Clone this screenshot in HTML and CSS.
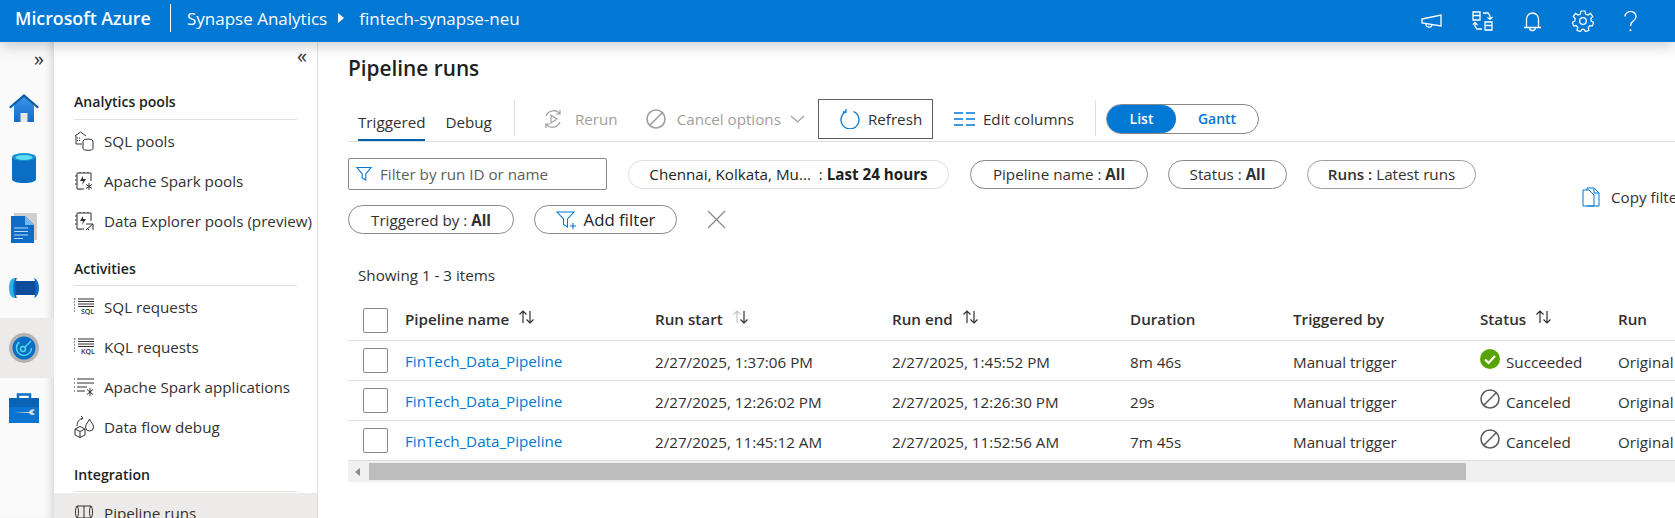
FILE: index.html
```html
<!DOCTYPE html>
<html lang="en">
<head>
  <meta charset="UTF-8">
  <title>Pipeline runs - Synapse Analytics</title>
  <link rel="stylesheet" href="styles.css">
</head>
<body>
  <svg class="defs" width="0" height="0">
    <defs>
      <linearGradient id="blueDown" x1="0" y1="0" x2="0" y2="1">
        <stop offset="0" stop-color="#3f97ee"/>
        <stop offset="1" stop-color="#0f6cc4"/>
      </linearGradient>
      <symbol id="sortIcon" viewBox="0 0 18 16">
        <path class="sort-up" d="M5 14V2M1.500 5.500 5 2l3.500 3.500" fill="none" stroke-width="1.200"/>
        <path d="M12 2v12M8.500 10.500 12 14l3.500-3.500" fill="none" stroke="#323130" stroke-width="1.200"/>
      </symbol>
      <symbol id="cancelIcon" viewBox="0 0 20 20">
        <circle cx="10" cy="10" r="9" fill="none" stroke="currentColor" stroke-width="1.600"/>
        <path d="M3.800 16.200 16.200 3.800" stroke="currentColor" stroke-width="1.600"/>
      </symbol>
      <symbol id="funnelIcon" viewBox="0 0 16 16">
        <path d="M1 1.500h14L9.800 8v6l-3.600-2V8z" fill="none" stroke="#0078d4" stroke-width="1.100"/>
      </symbol>
    </defs>
  </svg>

  <header class="topbar">
    <span class="brand">Microsoft Azure</span>
    <span class="crumb">Synapse Analytics</span>
    <svg class="crumb-arrow" width="6" height="10" viewBox="0 0 6 10"><path d="M0 0l6 5-6 5z" fill="#fff"/></svg>
    <span class="crumb crumb-workspace">fintech-synapse-neu</span>
    <div class="top-icons">
      <svg width="21" height="16" viewBox="0 0 21 16"><path d="M1 6l19-4v11L1 10zM5 11a3 2.500 0 0 0 6 1" fill="none" stroke="#fff" stroke-width="1.300"/></svg>
      <svg width="21" height="20" viewBox="0 0 21 20"><path d="M1 1h7v8H1zM1 4.500h7M13 11h7v8h-7zM13 14.500h7M11 2h5l2 3v3M15.500 6.500 18 8.500l2.500-2.500M10 18H5l-2-3v-3M.8 13.500 3 11.500l2.500 2.500" fill="none" stroke="#fff" stroke-width="1.300"/></svg>
      <svg width="19" height="21" viewBox="0 0 19 21"><path d="M1 16.500h17M3.500 16V8a6 6 0 0 1 12 0v8M6.500 17a3 2.500 0 0 0 6 0" fill="none" stroke="#fff" stroke-width="1.300"/></svg>
      <svg width="22" height="22" viewBox="0 0 22 22"><path d="M9 1h4l.6 3 2.300 1 2.600-1.600 2.200 3L18.800 8.500l.4 2.500 2.300 1.200-1 3.600-2.800-.2-1.500 2 .8 2.700-3.500 1.300-1.500-2.300h-2l-1.500 2.300-3.500-1.300.8-2.700-1.500-2-2.800.2-1-3.600L2.800 11l.4-2.500L1.300 6.400l2.200-3L6.100 5l2.300-1z" fill="none" stroke="#fff" stroke-width="1.200"/><circle cx="11" cy="11" r="3.300" fill="none" stroke="#fff" stroke-width="1.300"/></svg>
      <svg width="13" height="21" viewBox="0 0 13 21"><path d="M1 5.500a5.500 5 0 1 1 8.500 4.200C7.500 11 6.500 12 6.500 15" fill="none" stroke="#fff" stroke-width="1.300"/><circle cx="6.500" cy="19.300" r="1" fill="#fff"/></svg>
    </div>
  </header>

  <div class="workspace">
    <nav class="rail">
      <div class="rail-toggle">»</div>
      <div class="rail-item">
        <svg width="30" height="30" viewBox="0 0 30 30"><path d="M5 12 15 3l10 9v17H5z" fill="url(#blueDown)"/><path d="M0 14 15 1l15 13-1.500 1.500L15 4 1.500 15.500z" fill="#0f5ea8"/><rect x="11.500" y="20" width="7" height="9" fill="#e8e6e4"/></svg>
      </div>
      <div class="rail-item">
        <svg width="24" height="30" viewBox="0 0 24 30"><path d="M0 4v22c0 2.500 5 4 12 4s12-1.500 12-4V4z" fill="#0a6fc4"/><ellipse cx="12" cy="4" rx="12" ry="4" fill="#1b93d6"/><ellipse cx="12" cy="4.500" rx="8.500" ry="2.500" fill="#5fe0f0"/></svg>
      </div>
      <div class="rail-item">
        <svg width="26" height="30" viewBox="0 0 26 30"><rect x="3" y="0" width="23" height="27" fill="#d0d0d0"/><path d="M0 3h14l9 9v18H0z" fill="#0c6cc6"/><path d="M14 3l9 9h-9z" fill="#75b8f2"/><path d="M3 15h14M3 18.500h14M3 22h14M3 25.500h9" stroke="#b9dcf8"/></svg>
      </div>
      <div class="rail-item">
        <svg width="30" height="20" viewBox="0 0 30 20"><path d="M3 3h24v14H3z" fill="#104c9c"/><path d="M6 0C2 0 0 4 0 10s2 10 6 10c-2-3-2-17 0-20z" fill="#27b6e8"/><path d="M25 0c3 1 5 5 5 10s-2 9-5 10c2-3 2-17 0-20zM6 0c-2 3-2 17 0 20h2C6 17 6 3 8 0z" fill="#0b6cc0"/></svg>
      </div>
      <div class="rail-item rail-item-active">
        <svg width="30" height="30" viewBox="0 0 30 30"><circle cx="15" cy="15" r="15" fill="#b4b4b4"/><circle cx="15" cy="15" r="11.500" fill="#0a6fc4"/><circle cx="15" cy="15" r="7.500" fill="none" stroke="#50d4f0" stroke-width="1.500" stroke-dasharray="30 18"/><circle cx="14" cy="16" r="2.500" fill="none" stroke="#50d4f0" stroke-width="1.500"/><path d="M15.500 14.500 22 8" stroke="#50d4f0" stroke-width="1.500"/></svg>
      </div>
      <div class="rail-item">
        <svg width="30" height="30" viewBox="0 0 30 30"><path d="M9 6V1.500h12V6" fill="none" stroke="#0a6fc4" stroke-width="2.500"/><rect y="5" width="30" height="25" fill="#0b74d1"/><rect y="5" width="30" height="9" fill="#0a63b4"/><path d="M5 19h15a4 4 0 0 1 6-2l-3 2 3 2a4 4 0 0 1-6-1z" fill="#dcdcdc"/></svg>
      </div>
    </nav>

    <aside class="sidebar">
      <div class="collapse">«</div>

      <div class="nav-group nav-group-first">
        <h3 class="nav-heading">Analytics pools</h3>
        <div class="nav-row">
          <svg class="nav-icon" width="20" height="20" viewBox="0 0 20 20"><path d="M1 5 6.500 1 12 5M2 5v8h6M5 7h1M5 9.500h1M3 7h1M3 9.500h1" fill="none" stroke="#323130"/><ellipse cx="14" cy="10" rx="5" ry="2" fill="#fff" stroke="#323130"/><path d="M9 10v7.500c0 1 2 1.800 5 1.800s5-.8 5-1.800V10" fill="#fff" stroke="#323130"/></svg>
          SQL pools
        </div>
        <div class="nav-row">
          <svg class="nav-icon" width="20" height="20" viewBox="0 0 20 20"><path d="M10 18H3V2h14v8M1 5h2M1 9h2M1 13h2M6 1v1M10 1v1M14 1v1M6 18v1" fill="none" stroke="#323130"/><path d="M9 5 6 10h3l-1 4 4-6H9z" fill="#323130"/><path d="M15 12v7M12 13.500l6 4M18 13.500l-6 4" stroke="#323130"/></svg>
          Apache Spark pools
        </div>
        <div class="nav-row">
          <svg class="nav-icon" width="20" height="20" viewBox="0 0 20 20"><path d="M10 18H3V2h14v8M1 5h2M1 9h2M1 13h2M6 1v1M10 1v1M14 1v1M6 18v1" fill="none" stroke="#323130"/><path d="M9 5 6 10h3l-1 4 4-6H9z" fill="#323130"/><path d="M12 13l7 0v6M12 19l7-6M13 17l2 2" fill="none" stroke="#323130"/></svg>
          Data Explorer pools (preview)
        </div>
      </div>

      <div class="nav-group">
        <h3 class="nav-heading">Activities</h3>
        <div class="nav-row">
          <svg class="nav-icon" width="20" height="20" viewBox="0 0 20 20"><path d="M4 2h16M4 4.500h16M4 7h16M4 9.500h16M0 2h1.500M0 5h1M0 8h1M0 11h1M0 14h1" fill="none" stroke="#323130"/></svg>
          <span class="nav-mini">SQL</span>
          SQL requests
        </div>
        <div class="nav-row">
          <svg class="nav-icon" width="20" height="20" viewBox="0 0 20 20"><path d="M4 2h16M4 4.500h16M4 7h16M4 9.500h16M0 2h1.500M0 5h1M0 8h1M0 11h1M0 14h1" fill="none" stroke="#323130"/></svg>
          <span class="nav-mini">KQL</span>
          KQL requests
        </div>
        <div class="nav-row">
          <svg class="nav-icon" width="20" height="20" viewBox="0 0 20 20"><path d="M3 2h17M3 6h17M3 10h10M3 14h8M0 2h1M0 6h1M0 10h1M0 14h1" fill="none" stroke="#323130"/><path d="M16 11v8M13 12.500l6 5M19 12.500l-6 5" stroke="#323130"/></svg>
          Apache Spark applications
        </div>
        <div class="nav-row">
          <svg class="nav-icon" width="20" height="22" viewBox="0 0 20 22"><path d="M1 13l5-2.500 5 2.500v6l-5 2.500-5-2.500zM1 13l5 2.500 5-2.500M6 15.500v6M15.500 3c1 3 4 5 4 8a4 4 0 0 1-8 0c0-3 3-5 4-8zM3 10C3 6 5 3 9 2M7 0l2 2-2 2" fill="none" stroke="#323130"/></svg>
          Data flow debug
        </div>
      </div>

      <div class="nav-group">
        <h3 class="nav-heading">Integration</h3>
        <div class="nav-row nav-row-active">
          <svg class="nav-icon" width="20" height="20" viewBox="0 0 20 20"><path d="M3 3c-2 2-2 10 0 12M3 3c2 2 2 10 0 12M3 3h14M3 15h14M17 3c2 2 2 10 0 12M17 3c-2 2-2 10 0 12M10 3v12" fill="none" stroke="#323130"/></svg>
          Pipeline runs
        </div>
      </div>
    </aside>

    <main class="content">
      <h1 class="page-title">Pipeline runs</h1>

      <div class="toolbar">
        <span class="tab tab-active">Triggered</span>
        <span class="tab tab-debug">Debug</span>
        <span class="tool-divider"></span>
        <span class="tool tool-disabled tool-rerun">
          <svg width="20" height="20" viewBox="0 0 20 20"><path d="M3 7a8 8 0 0 1 14-2M17 13a8 8 0 0 1-14 2M17 1v4h-4M3 19v-4h4M8 6l6 4-6 4z" fill="none" stroke="#a19f9d" stroke-width="1.200"/></svg>
          Rerun
        </span>
        <span class="tool tool-disabled tool-cancel">
          <svg class="disabled-icon" width="20" height="20"><use href="#cancelIcon"/></svg>
          Cancel options
          <svg width="15" height="8" viewBox="0 0 15 8"><path d="M1 1l6.500 6L14 1" fill="none" stroke="#a19f9d" stroke-width="1.200"/></svg>
        </span>
        <span class="tool tool-refresh">
          <svg width="20" height="20" viewBox="0 0 20 20"><path d="M13.500 2.500a9 9 0 1 1-7 0M6 0v3H3" fill="none" stroke="#0078d4" stroke-width="1.300"/></svg>
          Refresh
        </span>
        <span class="tool tool-columns">
          <svg width="21" height="14" viewBox="0 0 21 14"><path d="M0 1h9M12 1h9M0 7h9M12 7h9M0 13h9M12 13h9" stroke="#0078d4" stroke-width="1.300"/></svg>
          Edit columns
        </span>
        <span class="tool-divider tool-divider-2"></span>
        <div class="view-toggle">
          <span class="view-option view-option-on">List</span>
          <span class="view-option">Gantt</span>
        </div>
      </div>

      <div class="filter-area">
        <div class="filter-rows">
          <div class="filter-row">
            <div class="search">
              <svg width="16" height="16"><use href="#funnelIcon"/></svg>
              <span>Filter by run ID or name</span>
            </div>
            <span class="chip chip-light chip-region"><span>Chennai, Kolkata, Mu... &nbsp;: <b>Last 24 hours</b></span></span>
            <span class="chip chip-pipeline"><span>Pipeline name : <b>All</b></span></span>
            <span class="chip chip-status"><span>Status : <b>All</b></span></span>
            <span class="chip chip-runs"><span><b class="semi">Runs :</b> Latest runs</span></span>
          </div>
          <div class="filter-row">
            <span class="chip chip-trigger"><span>Triggered by : <b>All</b></span></span>
            <span class="chip chip-add">
              <svg width="20" height="20" viewBox="0 0 20 20"><path d="M1 2h17l-6.500 7v8l-4-2.500V9z" fill="none" stroke="#0078d4" stroke-width="1.100"/><path d="M14 16h6M17 13v6" stroke="#0078d4" stroke-width="1.100"/></svg>
              Add filter
            </span>
            <svg class="clear-filter" width="19" height="19" viewBox="0 0 19 19"><path d="M1 1l17 17M18 1 1 18" stroke="#8a8886" stroke-width="1.200"/></svg>
          </div>
        </div>
        <div class="copy-filter">
          <svg width="18" height="20" viewBox="0 0 18 20"><path d="M5 3V1h7l5 5v13H5M12 1v5h5M1 3h6l5 5v11H1z" fill="#fff" stroke="#0078d4"/></svg>
          Copy filters
        </div>
      </div>

      <div class="showing">Showing 1 - 3 items</div>

      <div class="grid-row grid-head">
        <span class="check"></span>
        <span>Pipeline name <svg class="sort sort-dark" width="18" height="16"><use href="#sortIcon"/></svg></span>
        <span>Run start <svg class="sort sort-pale" width="18" height="16"><use href="#sortIcon"/></svg></span>
        <span>Run end <svg class="sort sort-dark" width="18" height="16"><use href="#sortIcon"/></svg></span>
        <span>Duration</span>
        <span>Triggered by</span>
        <span>Status <svg class="sort sort-dark" width="18" height="16"><use href="#sortIcon"/></svg></span>
        <span>Run</span>
      </div>

      <div class="grid-row">
        <span class="check"></span>
        <a class="run-link">FinTech_Data_Pipeline</a>
        <span>2/27/2025, 1:37:06 PM</span>
        <span>2/27/2025, 1:45:52 PM</span>
        <span>8m 46s</span>
        <span>Manual trigger</span>
        <span class="status">
          <svg width="20" height="20" viewBox="0 0 20 20"><circle cx="10" cy="10" r="10" fill="#57a300"/><path d="M5 10.500 8.500 14 15 7" fill="none" stroke="#fff" stroke-width="2.200"/></svg>
          Succeeded
        </span>
        <span>Original</span>
      </div>
      <div class="grid-row">
        <span class="check"></span>
        <a class="run-link">FinTech_Data_Pipeline</a>
        <span>2/27/2025, 12:26:02 PM</span>
        <span>2/27/2025, 12:26:30 PM</span>
        <span>29s</span>
        <span>Manual trigger</span>
        <span class="status">
          <svg class="canceled-icon" width="20" height="20"><use href="#cancelIcon"/></svg>
          Canceled
        </span>
        <span>Original</span>
      </div>
      <div class="grid-row">
        <span class="check"></span>
        <a class="run-link">FinTech_Data_Pipeline</a>
        <span>2/27/2025, 11:45:12 AM</span>
        <span>2/27/2025, 11:52:56 AM</span>
        <span>7m 45s</span>
        <span>Manual trigger</span>
        <span class="status">
          <svg class="canceled-icon" width="20" height="20"><use href="#cancelIcon"/></svg>
          Canceled
        </span>
        <span>Original</span>
      </div>

      <div class="hscroll">
        <span class="hscroll-arrow"></span>
        <span class="hscroll-thumb"></span>
      </div>
    </main>
  </div>
</body>
</html>
```

FILE: styles.css
```css
* {
  box-sizing: border-box;
}

html, body {
  height: 518px;
  margin: 0;
  overflow: hidden;
}

body {
  font-family: "Open Sans", "Noto Sans", sans-serif;
  font-size: 15.2px;
  color: #323130;
  background: #fff;
}

.defs {
  display: block;
  height: 0;
}

.topbar {
  position: relative;
  z-index: 3;
  display: flex;
  align-items: center;
  height: 42px;
  padding: 0 0 6px 15px;
  background: #0078d4;
  color: #fff;
  box-shadow: 0 3px 16px rgba(0, 0, 0, 0.22);
}

.brand {
  flex: 0 0 156px;
  height: 28px;
  line-height: 28px;
  font-size: 17.8px;
  font-weight: 600;
  border-right: 1px solid #fff;
  white-space: nowrap;
}

.crumb {
  font-size: 17px;
  margin-left: 16px;
}

.crumb-arrow {
  margin-left: 11px;
}

.crumb-workspace {
  margin-left: 15px;
}

.top-icons {
  display: flex;
  align-items: center;
  gap: 30px;
  margin-left: auto;
  padding: 6px 38px 0 0;
}

.workspace {
  display: flex;
  height: 476px;
}

.rail {
  position: relative;
  z-index: 2;
  flex: 0 0 54px;
  background: #fafafa;
  box-shadow: inset -8px 0 8px -6px rgba(0, 0, 0, 0.16);
}

.rail-toggle {
  height: 36px;
  padding: 4px 0 0 34px;
  font-size: 20px;
  line-height: 26px;
}

.rail-item {
  display: flex;
  align-items: center;
  justify-content: center;
  height: 60px;
  padding-right: 6px;
}

.rail-item-active {
  background: #edebe9;
}

.sidebar {
  flex: 0 0 264px;
  border-right: 1px solid #e1dfdd;
  background: #fff;
}

.collapse {
  height: 30px;
  padding: 1px 10px 0 0;
  text-align: right;
  font-size: 20px;
  line-height: 26px;
}

.nav-group {
  margin-top: 10px;
}

.nav-group-first {
  margin-top: 14px;
}

.nav-heading {
  height: 34px;
  margin: 0 20px;
  padding-top: 7px;
  border-bottom: 1px solid #e1dfdd;
  font-size: 14.1px;
  font-weight: 600;
  line-height: 20px;
  color: #201f1e;
}

.nav-group-first .nav-heading {
  padding-top: 6px;
}

.nav-row {
  position: relative;
  display: flex;
  align-items: center;
  height: 40px;
  padding: 0 0 2px 20px;
  white-space: nowrap;
}

.nav-heading + .nav-row {
  margin-top: 2px;
}

.nav-row-active {
  background: #edebe9;
  box-shadow: 0 -1px 0 #edebe9;
}

.nav-icon {
  margin-right: 10px;
  flex: none;
}

.nav-mini {
  position: absolute;
  left: 27px;
  top: 20px;
  font-size: 7px;
  line-height: 8px;
  font-weight: 600;
}

.content {
  flex: 1;
  min-width: 0;
  padding: 12px 0 0 30px;
  overflow: hidden;
  white-space: nowrap;
}

.page-title {
  margin: 0;
  font-size: 20.8px;
  font-weight: 600;
  line-height: 28px;
  color: #201f1e;
}

.toolbar {
  display: flex;
  align-items: flex-start;
  height: 43px;
  margin-top: 17px;
  border-bottom: 1px solid #e1dfdd;
}

.tab {
  height: 42px;
  margin: 0 10px;
  padding-top: 13px;
  line-height: 20px;
}

.tab-active {
  border-bottom: 2px solid #0063b1;
}

.tab-debug {
  margin-right: 12px;
}

.tool-divider {
  width: 1px;
  height: 36px;
  margin: 1px 0 0 10px;
  background: #e1dfdd;
}

.tool {
  display: flex;
  align-items: center;
  gap: 10px;
  height: 40px;
}

.tool-disabled {
  color: #a19f9d;
}

.disabled-icon {
  color: #a19f9d;
  margin-right: 2px;
}

.tool-rerun {
  margin-left: 28px;
  gap: 12px;
}

.tool-cancel {
  margin-left: 28px;
  gap: 9px;
}

.tool-refresh {
  width: 115px;
  margin-left: 13px;
  padding-left: 21px;
  gap: 8px;
  border: 1px solid #605e5c;
}

.tool-columns {
  margin-left: 21px;
  gap: 8px;
}

.tool-divider-2 {
  margin-left: 21px;
}

.view-toggle {
  display: flex;
  width: 153px;
  height: 30px;
  margin: 5px 0 0 10px;
  border: 1px solid #8a8886;
  border-radius: 15px;
  font-size: 14px;
  font-weight: 600;
  color: #0078d4;
}

.view-option {
  flex: 1;
  text-align: center;
  line-height: 27px;
}

.view-option-on {
  flex: 0 0 69px;
  background: #0078d4;
  border-radius: 15px;
  color: #fff;
}

.filter-area {
  display: flex;
  align-items: center;
  margin-top: 16px;
}

.filter-rows {
  flex: 0 0 1234px;
}

.filter-row {
  display: flex;
  align-items: center;
  height: 32px;
}

.filter-row + .filter-row {
  height: 29px;
  margin-top: 15px;
}

.search {
  display: flex;
  align-items: center;
  gap: 8px;
  width: 259px;
  height: 32px;
  padding-left: 7px;
  border: 1px solid #8a8886;
  border-radius: 2px;
  color: #605e5c;
}

.chip {
  display: flex;
  align-items: center;
  justify-content: center;
  height: 29px;
  border: 1px solid #8a8886;
  border-radius: 15px;
}

.chip-light {
  border-color: #e1dfdd;
  color: #201f1e;
}

.chip-region {
  width: 321px;
  margin-left: 21px;
}

.chip-pipeline {
  width: 178px;
  margin-left: 21px;
}

.chip-status {
  width: 119px;
  margin-left: 20px;
}

.chip-runs {
  width: 169px;
  margin-left: 20px;
  border-color: #a19f9d;
}

.chip-trigger {
  width: 166px;
}

.chip-add {
  width: 143px;
  margin-left: 20px;
  gap: 8px;
  font-size: 16.8px;
  color: #201f1e;
}

.clear-filter {
  margin-left: 30px;
}

.semi {
  font-weight: 600;
}

.copy-filter {
  display: flex;
  align-items: center;
  gap: 11px;
  padding-top: 2px;
}

.showing {
  height: 20px;
  margin: 31px 0 16px 10px;
  line-height: 20px;
}

.grid-row {
  display: grid;
  grid-template-columns: 57px 250px 237px 238px 163px 187px 138px 120px;
  align-items: center;
  height: 40px;
  border-bottom: 1px solid #e1dfdd;
}

.grid-row > span:not(.check) {
  padding-top: 2px;
}

.grid-head {
  font-weight: 600;
}

.grid-head > span:not(.check) {
  display: flex;
  align-items: center;
  padding: 0 0 3px;
}

.check {
  width: 25px;
  height: 25px;
  margin-left: 15px;
  border: 1px solid #8a8886;
  border-radius: 2px;
}

.sort {
  margin: -4px 0 0 9px;
}

.sort-dark {
  stroke: #323130;
}

.sort-pale {
  stroke: #c8c6c4;
}

.run-link {
  color: #0078d4;
}

.status {
  display: flex;
  align-items: center;
  gap: 6px;
}

.status svg {
  margin-top: -5px;
}

.canceled-icon {
  color: #605e5c;
}

.hscroll {
  display: flex;
  align-items: center;
  height: 21px;
  background: #f0f0f0;
}

.hscroll-arrow {
  width: 0;
  height: 0;
  margin-left: 7px;
  border: 4px solid transparent;
  border-left: 0;
  border-right: 5px solid #8a8886;
}

.hscroll-thumb {
  width: 1097px;
  height: 17px;
  margin-left: 9px;
  background: #bdbdbd;
}
```
